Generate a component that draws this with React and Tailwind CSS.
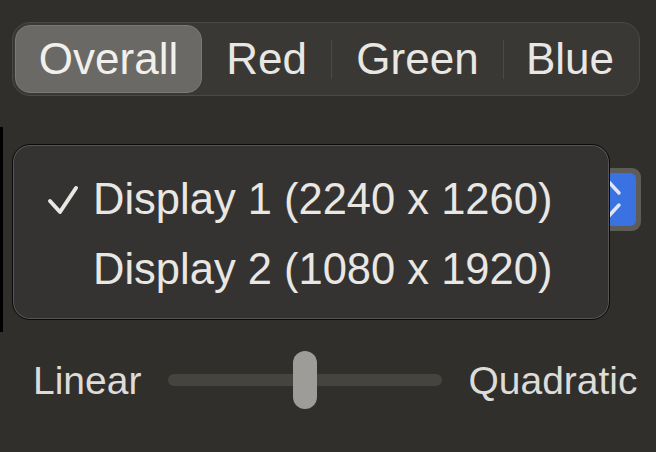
import React from "react";

const font = { fontFamily: '"Liberation Sans", Arial, sans-serif' };

export default function App() {
  return (
    <div
      className="w-[656px] h-[452px] bg-[#312f2b] overflow-hidden flex flex-col text-[#e9e7e3]"
      style={font}
    >
      {/* Segmented control */}
      <div className="mt-[22px] ml-[12px] w-[628px] h-[74px] rounded-[18px] bg-[#393834] border border-[#4a4945] p-[2px] flex items-center">
        <div className="w-[187px] h-[68px] rounded-[15px] bg-[#6a6966] border border-[#7a7976] flex items-center justify-center text-[44px] leading-none text-[#f1f0ed]">
          Overall
        </div>
        <div className="w-[129px] h-[68px] flex items-center justify-center text-[44px] leading-none">
          Red
        </div>
        <div className="w-px h-[39px] bg-[#4c4a46]" />
        <div className="w-[171px] h-[68px] flex items-center justify-center text-[44px] leading-none">
          Green
        </div>
        <div className="w-px h-[39px] bg-[#4c4a46]" />
        <div className="w-[132px] h-[68px] flex items-center justify-center text-[44px] leading-none">
          Blue
        </div>
      </div>

      {/* Middle: popup menu over a pop-up button */}
      <div className="mt-[31px] h-[205px] flex">
        <div className="w-[3px] h-full bg-black" />
        <div className="relative flex-1">
          {/* pop-up button behind the menu */}
          <div className="absolute left-[557px] top-[41px] w-[81px] h-[63px] rounded-[9px] bg-[#5d5c59] p-[5px]">
            <div className="w-full h-full rounded-[6px] bg-[#3a72e2]">
              <svg width="71" height="53" viewBox="0 0 71 53" className="block">
                <polyline
                  points="30,20 42,7 54,20"
                  fill="none"
                  stroke="#dfe6f5"
                  strokeWidth="3.5"
                  strokeLinecap="round"
                  strokeLinejoin="round"
                />
                <polyline
                  points="30,32 42,45 54,32"
                  fill="none"
                  stroke="#dfe6f5"
                  strokeWidth="3.5"
                  strokeLinecap="round"
                  strokeLinejoin="round"
                />
              </svg>
            </div>
          </div>

          {/* menu */}
          <div className="relative z-10 ml-[9px] mt-[17px] w-[598px] h-[176px] rounded-[18px] bg-[#343331] border border-[#0b0b0b] shadow-[inset_0_0_0_1px_#575654] pt-[20px]">
            <div className="h-[70px] flex items-center">
              <div className="w-[80px] flex justify-end pr-[14px]">
                <svg width="32" height="30" viewBox="0 0 32 30" className="block">
                  <polyline
                    points="3,16 13,27 29,3"
                    fill="none"
                    stroke="#e9e7e3"
                    strokeWidth="4"
                    strokeLinecap="round"
                    strokeLinejoin="round"
                  />
                </svg>
              </div>
              <span className="text-[43.5px] leading-none">Display 1 (2240 x 1260)</span>
            </div>
            <div className="h-[70px] flex items-center">
              <div className="w-[80px]" />
              <span className="text-[43.5px] leading-none">Display 2 (1080 x 1920)</span>
            </div>
          </div>
        </div>
      </div>

      {/* Slider row */}
      <div className="mt-[18px] h-[60px] ml-[33px] flex items-center text-[39px] leading-none text-[#dedcd8]">
        <span>Linear</span>
        <div className="relative ml-[27px] w-[274px] h-[12px] rounded-full bg-[#45443f]">
          <div className="absolute left-[125px] top-[-23px] w-[24px] h-[58px] rounded-full bg-[#9d9c99]" />
        </div>
        <span className="ml-[26px]">Quadratic</span>
      </div>
    </div>
  );
}
